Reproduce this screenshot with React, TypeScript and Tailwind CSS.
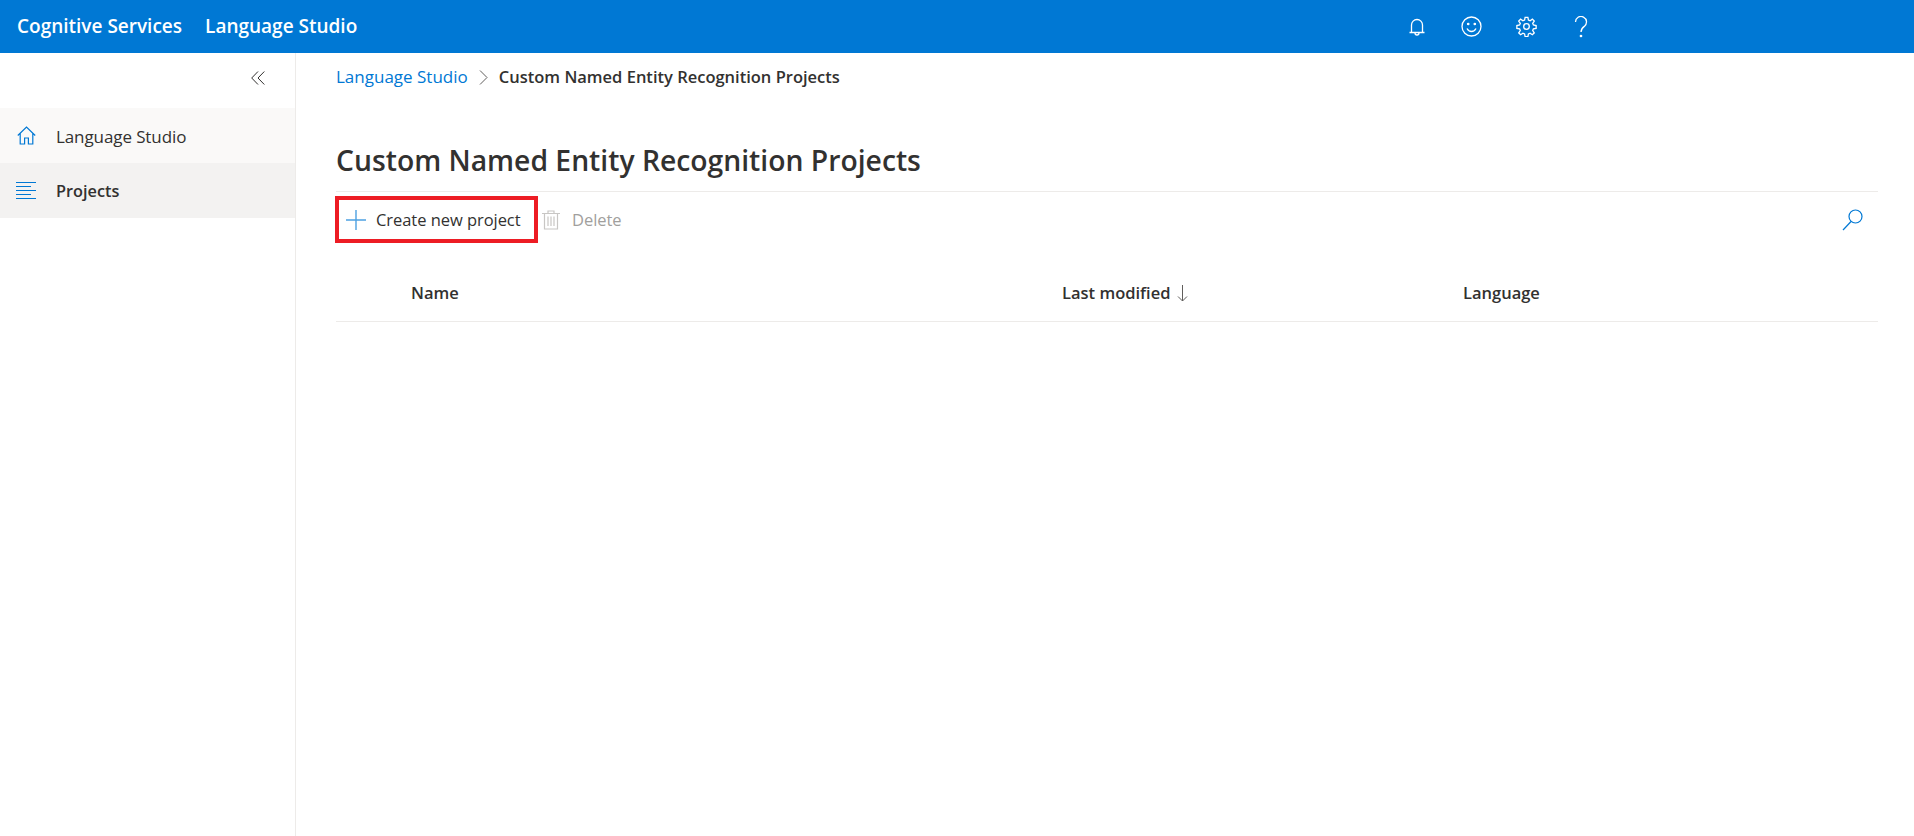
import React from "react";

function Header() {
  return (
    <header className="flex h-[53px] shrink-0 items-center bg-[#0078d4] text-white">
      <span className="ml-[17px] text-[19px] font-semibold">Cognitive Services</span>
      <span className="ml-[23px] text-[19px] font-semibold">Language Studio</span>
      <div className="ml-auto mr-[326px] flex items-center gap-[34px]">
        <svg width="20" height="20" viewBox="0 0 20 20" fill="none" stroke="currentColor" strokeWidth="1.3">
          <path d="M4.5 15V8a5.5 5.5 0 0 1 11 0v7M2.5 15.5h15M8 16a2 2 0 0 0 4 0" />
        </svg>
        <svg width="21" height="21" viewBox="0 0 21 21" fill="none" stroke="currentColor" strokeWidth="1.3">
          <circle cx="10.5" cy="10.5" r="9.5" />
          <circle cx="7.2" cy="8" r="0.7" fill="currentColor" />
          <circle cx="13.8" cy="8" r="0.7" fill="currentColor" />
          <path d="M6 12.5c1 2 2.6 3 4.5 3s3.5-1 4.5-3" />
        </svg>
        <svg width="21" height="21" viewBox="0 0 24 24" fill="none" stroke="currentColor" strokeWidth="1.5">
          <circle cx="12" cy="12" r="3.2" />
          <path d="M10.4 1.5h3.2l.6 3.1 1.9.8 2.6-1.8 2.2 2.2-1.8 2.6.8 1.9 3.1.6v3.2l-3.1.6-.8 1.9 1.8 2.6-2.2 2.2-2.6-1.8-1.9.8-.6 3.1h-3.2l-.6-3.1-1.9-.8-2.6 1.8-2.2-2.2 1.8-2.6-.8-1.9-3.1-.6v-3.2l3.1-.6.8-1.9-1.8-2.6 2.2-2.2 2.6 1.8 1.9-.8z" />
        </svg>
        <svg width="14" height="22" viewBox="0 0 14 22" fill="none" stroke="currentColor" strokeWidth="1.3" className="ml-[3px]">
          <path d="M1.5 6a5.5 5.5 0 1 1 8.8 4.4C8 12 7 13 7 16" />
          <circle cx="7" cy="20" r="0.7" fill="currentColor" />
        </svg>
      </div>
    </header>
  );
}

function Sidebar() {
  return (
    <aside className="w-[296px] shrink-0 border-r border-[#edebe9]">
      <div className="flex h-[55px] items-center justify-end pr-[30px] pb-[6px]">
        <svg width="14" height="14" viewBox="0 0 14 14" fill="none" stroke="#323130" strokeWidth="1">
          <path d="M7 .5.7 7 7 13.5M13.3.5 7 7l6.3 6.5" />
        </svg>
      </div>
      <div className="flex h-[55px] items-center bg-[#faf9f8] pl-[17px] text-[#323130]">
        <svg width="19" height="19" viewBox="0 0 19 19" fill="none" stroke="#0078d4" strokeWidth="1.2">
          <path d="M.8 9.5 9.5 1l8.7 8.5M3.2 7.5V18h4.4v-6h3.8v6h4.4V7.5" />
        </svg>
        <span className="ml-[20px] pt-[2px] text-[17px] tracking-[-0.1px]">Language Studio</span>
      </div>
      <div className="flex h-[55px] items-center bg-[#f3f2f1] pl-[16px] text-[#323130]">
        <svg width="20" height="18" viewBox="0 0 20 18" fill="none" stroke="#0078d4" strokeWidth="1">
          <path d="M0 .5h20M0 4.5h15M0 8.5h20M0 12.5h15M0 16.5h20" />
        </svg>
        <span className="ml-[20px] pt-[2px] text-[16.3px] font-semibold">Projects</span>
      </div>
    </aside>
  );
}

function Toolbar() {
  return (
    <div className="flex h-[52px] items-center border-t border-[#edebe9] pt-[4px]">
      <div className="-ml-[1px] flex h-[47px] w-[203px] items-center border-[4px] border-[#ed1c24] pl-[7px]">
        <svg width="20" height="20" viewBox="0 0 20 20" fill="none" stroke="#0078d4" strokeOpacity="0.7" strokeWidth="1.4">
          <path d="M10 0v20M0 10h20" />
        </svg>
        <span className="ml-[10px] pt-[2px] text-[16.5px] tracking-[-0.05px] text-[#323130]">Create new project</span>
      </div>
      <svg width="18" height="20" viewBox="0 0 18 20" fill="none" stroke="#c8c6c4" strokeWidth="1.2" className="ml-[4px]">
        <path d="M0 3.5h18M6 3V1h6v2M2.5 3.5V19h13V3.5M6 6.5V16M9 6.5V16M12 6.5V16" />
      </svg>
      <span className="ml-[12px] pt-[2px] text-[16.5px] tracking-[-0.05px] text-[#a19f9d]">Delete</span>
      <svg width="21" height="22" viewBox="0 0 21 22" fill="none" stroke="#0078d4" strokeWidth="1.2" className="ml-auto mr-[15px]">
        <circle cx="13.5" cy="7.5" r="6.5" />
        <path d="M9 12.5 1 21" />
      </svg>
    </div>
  );
}

function ColumnHeaders() {
  return (
    <div className="mt-[22px] grid h-[57px] grid-cols-[75px_651px_401px_1fr] items-start border-b border-[#edebe9] pt-[16px] text-[16.5px] font-semibold text-[#323130]">
      <span />
      <span>Name</span>
      <span className="flex items-center">
        Last modified
        <svg width="11" height="17" viewBox="0 0 11 17" fill="none" stroke="#605e5c" strokeWidth="1" className="ml-[7px]">
          <path d="M5.5 0v16M1 11.5 5.5 16 10 11.5" />
        </svg>
      </span>
      <span>Language</span>
    </div>
  );
}

export default function App() {
  return (
    <div className="flex h-[836px] flex-col bg-white font-['Open_Sans','Noto_Sans',sans-serif]">
      <Header />
      <div className="flex min-h-0 flex-1">
        <Sidebar />
        <main className="flex-1 pl-[40px] pr-[36px]">
          <nav className="flex h-[48px] items-center text-[17px]">
            <span className="text-[#0078d4]">Language Studio</span>
            <svg width="9" height="15" viewBox="0 0 9 15" fill="none" stroke="#605e5c" strokeWidth="1" className="mx-[11px]">
              <path d="M1 .5 8 7.5 1 14.5" />
            </svg>
            <span className="text-[16.5px] font-semibold text-[#323130]">Custom Named Entity Recognition Projects</span>
          </nav>
          <h1 className="mt-[33px] h-[57px] text-[28.3px] leading-[52px] font-semibold text-[#323130]">
            Custom Named Entity Recognition Projects
          </h1>
          <Toolbar />
          <ColumnHeaders />
        </main>
      </div>
    </div>
  );
}
